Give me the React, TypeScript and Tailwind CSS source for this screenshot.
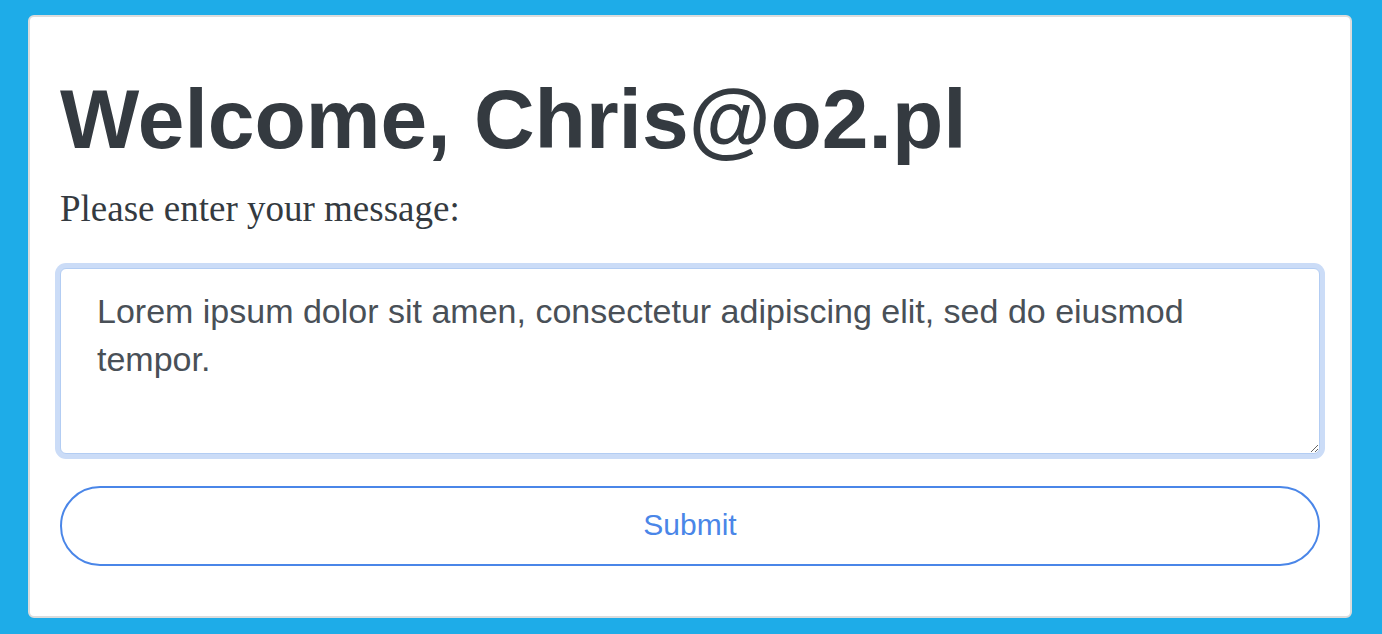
export default function App() {
  return (
    <div className="min-h-[634px] bg-[#1eace8] pt-[15px] pl-[28px] pr-[30px] pb-[16px]">
      <div className="rounded-md border-2 border-[#dcdcdc] bg-white px-[30px] pt-[52px] pb-[50px]">
        <h1 className="font-['Liberation_Sans',Arial,sans-serif] text-[84px] leading-[100px] font-bold text-[#343a40]">
          Welcome, Chris@o2.pl
        </h1>
        <p className="mt-[12px] font-['Liberation_Serif',Georgia,serif] text-[37px] leading-[56px] text-[#343a40]">
          Please enter your message:
        </p>
        <textarea
          className="mt-[31px] block h-[186px] w-full rounded-md border border-[#b3cdf3] bg-white px-[36px] pt-[18px] font-['Liberation_Sans',Arial,sans-serif] text-[34px] leading-[48px] text-[#495057] outline-none ring-[5px] ring-[#cbdcf7]"
          defaultValue="Lorem ipsum dolor sit amen, consectetur adipiscing elit, sed do eiusmod tempor."
        />
        <button
          type="button"
          className="mt-[32px] flex h-[80px] w-full items-center justify-center rounded-full border-2 border-[#4a86e8] bg-white pb-[3px] font-['Liberation_Sans',Arial,sans-serif] text-[30px] text-[#4a86e8]"
        >
          Submit
        </button>
      </div>
    </div>
  );
}
